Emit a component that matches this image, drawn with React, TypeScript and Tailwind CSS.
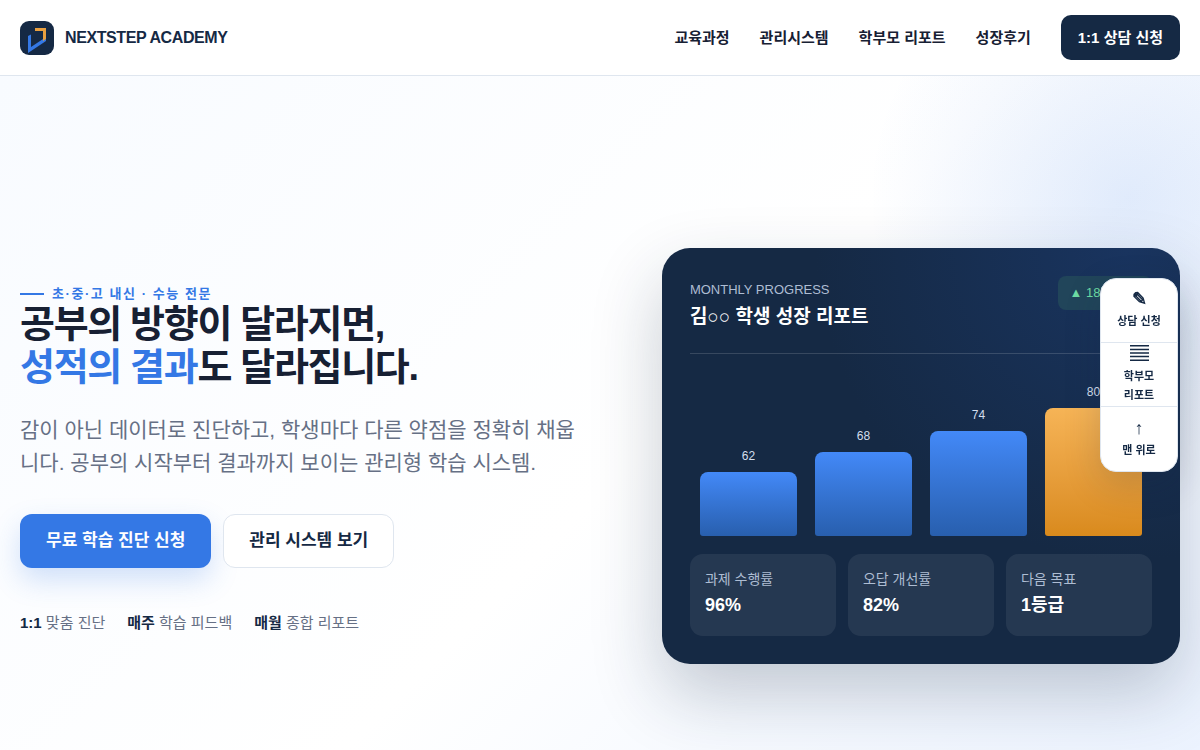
import React from "react";

const navItems = ["교육과정", "관리시스템", "학부모 리포트", "성장후기"];

const promises = [
  { lead: "1:1", text: "맞춤 진단" },
  { lead: "매주", text: "학습 피드백" },
  { lead: "매월", text: "종합 리포트" },
];

const scores = [
  { value: 62, height: 64, color: "from-[#4389f8] to-[#285fae]" },
  { value: 68, height: 84, color: "from-[#4389f8] to-[#285fae]" },
  { value: 74, height: 105, color: "from-[#4389f8] to-[#285fae]" },
  { value: 80, height: 128, color: "from-[#f6b456] to-[#d98a1c]" },
];

const stats = [
  { label: "과제 수행률", value: "96%" },
  { label: "오답 개선률", value: "82%" },
  { label: "다음 목표", value: "1등급" },
];

function Logo() {
  return (
    <svg viewBox="0 0 34 34" className="size-[34px]" aria-hidden="true">
      <rect width="34" height="34" rx="9" fill="#152944" />
      <path d="M8 15 L11 13.5 V26 L26 16 V20 L8 32 Z" fill="#3478e5" />
      <path d="M15 7 H26 V18 L23 20 V10 H15 Z" fill="#e9a040" />
    </svg>
  );
}

function Header() {
  return (
    <header className="relative z-10 flex h-[76px] items-center justify-between border-b border-[#dfe6ef] bg-white px-5">
      <a href="#top" className="flex items-center gap-[11px] font-bold tracking-tight text-[#152944]">
        <Logo />
        NEXTSTEP ACADEMY
      </a>
      <nav className="flex items-center gap-[30px] text-[15px] leading-[21px] font-bold text-[#172033]">
        {navItems.map((item) => (
          <a key={item} href="#">
            {item}
          </a>
        ))}
        <a href="#consult" className="rounded-[10px] bg-[#152944] px-[17px] py-3 text-white">
          1:1 상담 신청
        </a>
      </nav>
    </header>
  );
}

function Intro() {
  return (
    <div className="pt-[7px]">
      <p className="flex items-center gap-2 text-[13px] leading-[18px] font-bold tracking-[0.12em] text-[#3478e5]">
        <span className="h-0.5 w-6 bg-[#3478e5]" />
        초·중·고 내신 · 수능 전문
      </p>
      <h1 className="text-[38px] leading-[43px] font-bold tracking-[-0.035em] text-[#172033]">
        공부의 방향이 달라지면,
        <br />
        <span className="text-[#3478e5]">성적의 결과</span>도 달라집니다.
      </h1>
      <p className="mt-6 text-[21px] leading-[33px] text-[#667085]">
        감이 아닌 데이터로 진단하고, 학생마다 다른 약점을 정확히 채웁니다. 공부의 시작부터 결과까지 보이는 관리형 학습
        시스템.
      </p>
      <div className="mt-[35px] flex gap-3 text-[17px] font-bold">
        <a
          href="#consult"
          className="flex h-[54px] items-center rounded-xl bg-[#3478e5] px-[26px] text-white shadow-[0_12px_28px_rgba(52,120,229,0.22)]"
        >
          무료 학습 진단 신청
        </a>
        <a
          href="#system"
          className="flex h-[54px] items-center rounded-xl border border-[#dfe6ef] bg-white px-[25px] text-[#152944]"
        >
          관리 시스템 보기
        </a>
      </div>
      <ul className="mt-11 flex gap-[22px] text-[15px] leading-[22px] text-[#667085]">
        {promises.map((item) => (
          <li key={item.lead}>
            <strong className="text-[#152944]">{item.lead}</strong> {item.text}
          </li>
        ))}
      </ul>
    </div>
  );
}

function ReportCard() {
  return (
    <section className="rounded-[28px] bg-[#152944] bg-[radial-gradient(circle_at_90%_0%,#19345f_0%,#152944_50%)] p-7 text-white shadow-[0_30px_70px_rgba(21,41,68,0.24)]">
      <div className="flex items-start justify-between border-b border-white/15 pb-[22px]">
        <div>
          <p className="text-[13px] leading-[27px] text-[#aebdd3]">MONTHLY PROGRESS</p>
          <h2 className="text-[19px] leading-7 font-bold">김○○ 학생 성장 리포트</h2>
        </div>
        <p className="rounded-lg bg-[#21455a] px-3 py-[7px] text-[13px] leading-5 text-[#6ddca4]">▲ 18점 상승</p>
      </div>
      <div className="flex h-[182px] items-end gap-[18px] px-[10px]">
        {scores.map((score) => (
          <div key={score.value} className="flex-1">
            <p className="pb-[6px] text-center text-xs leading-5 text-[#d3deed]">{score.value}</p>
            <div
              className={`rounded-t-lg rounded-b-[3px] bg-linear-to-b ${score.color}`}
              style={{ height: score.height }}
            />
          </div>
        ))}
      </div>
      <dl className="mt-[18px] grid grid-cols-3 gap-3">
        {stats.map((stat) => (
          <div key={stat.label} className="h-[82px] rounded-[13px] bg-white/7 px-[15px] py-3">
            <dt className="text-sm leading-[26px] text-[#aebdd3]">{stat.label}</dt>
            <dd className="text-lg leading-[26px] font-bold">{stat.value}</dd>
          </div>
        ))}
      </dl>
    </section>
  );
}

function LinesIcon() {
  return (
    <svg viewBox="0 0 19 16" className="h-4 w-[19px] shrink-0" aria-hidden="true">
      <path d="M0 .8H19M0 4.4H19M0 8H19M0 11.6H19M0 15.2H19" stroke="#152944" strokeWidth="1.5" />
    </svg>
  );
}

function QuickMenu() {
  const item = "flex h-16 flex-col items-center justify-center text-center";
  return (
    <aside className="fixed top-[278px] right-[22px] z-20 w-[78px] overflow-hidden rounded-2xl border border-[#dfe6ef] bg-white text-[11px] leading-[19px] font-bold text-[#152944] shadow-[0_12px_36px_rgba(21,41,68,0.18)]">
      <a href="#consult" className={`${item} border-b border-[#dfe6ef] pb-1`}>
        <span className="text-lg leading-[26px]">✎</span>
        상담 신청
      </a>
      <a href="#report" className={`${item} border-b border-[#dfe6ef]`}>
        <LinesIcon />
        <span className="mt-[6px]">
          학부모
          <br />
          리포트
        </span>
      </a>
      <a href="#top" className={`${item} pb-1`}>
        <span className="text-lg leading-[26px]">↑</span>
        맨 위로
      </a>
    </aside>
  );
}

export default function App() {
  return (
    <div
      id="top"
      className="overflow-x-hidden bg-white font-['Liberation_Sans','Noto_Sans_CJK_KR',sans-serif] text-base"
    >
      <Header />
      <main className="grid min-h-[760px] grid-cols-[1.1fr_1fr] items-center gap-[72px] bg-[radial-gradient(circle_at_94%_16%,rgba(52,120,229,0.13),transparent_20%),linear-gradient(135deg,#f8fbff_0%,#ffffff_52%,#eaf2ff_100%)] px-5">
        <Intro />
        <ReportCard />
      </main>
      <QuickMenu />
    </div>
  );
}
